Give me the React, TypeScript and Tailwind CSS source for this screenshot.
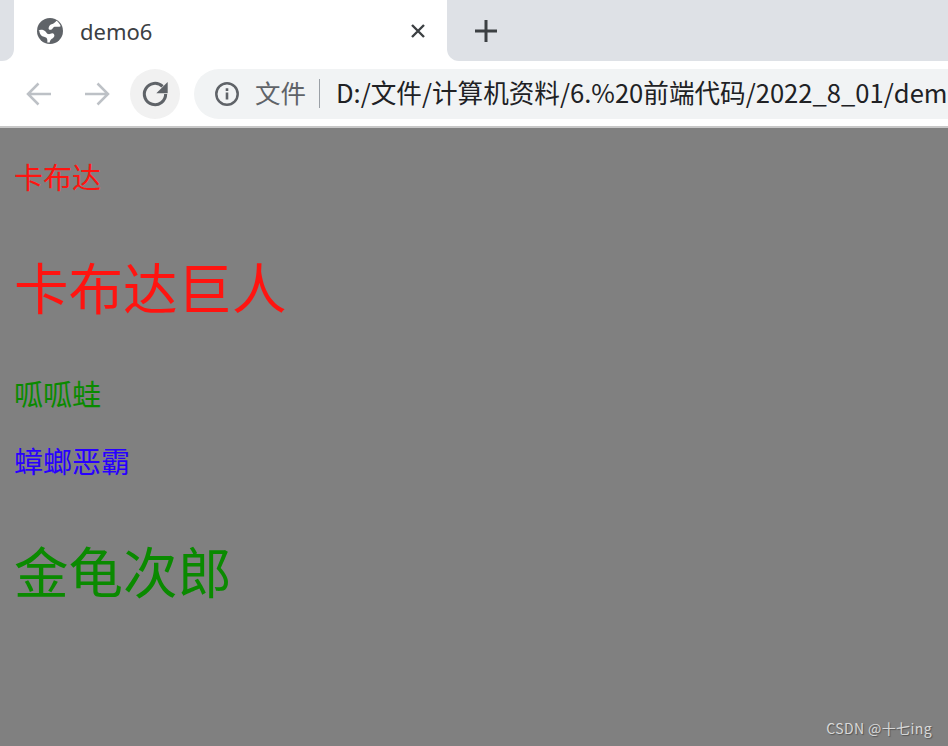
const CJK = "font-['Noto_Sans_CJK_SC','Noto_Sans',sans-serif]";

export default function App() {
  return (
    <div className="relative flex h-[746px] w-[948px] flex-col overflow-hidden bg-[#808080] font-['Noto_Sans','Noto_Sans_CJK_SC',sans-serif]">
      <div className="flex h-[61px] shrink-0 bg-white">
        <div className="w-[14px] rounded-br-[12px] bg-[#dee1e6]" />
        <div className="flex w-[433px] items-center rounded-t-[14px] bg-white pl-[23px] pr-[21px]">
          <svg viewBox="0 0 26 26" className="h-[26px] w-[26px] shrink-0">
            <circle cx="13" cy="13" r="13" fill="#5f6368" />
            <path d="M14.500 6.300c2.300-.6 4-2 5-3.500 1.900 1.300 3.400 3.300 4.200 5.400-2.700 1.400-4.500 0-6.200.6-1.500.6-1.800 2.300-3.300 2.900-1.300.5-2.700-.2-2.600-1.500.1-1.500 1.300-3.400 2.900-3.900Z" fill="#ffffff" />
            <path d="M1.200 12.500c2-1.300 5-.8 6.700.4 1.300 1 1.800 2.800 3.500 3.200 1.400.3 2.600-1 3.900-.9 1.500.1 2.400 1.500 2 3-.5 1.700-2.300 2.200-3.300 3.400-.9 1-1 1.800-1.300 2.800-.6.100-1.600.1-2.400 0 .2-1.800.2-3.600-1.200-4.800-1.200-1-2.800-.8-4.200-1.700-1.500-1-2.400-3-2.700-5.400Z" fill="#ffffff" />
          </svg>
          <span className="ml-[17px] pt-[1px] text-[22px] leading-[30px] text-[#3c4043]">demo6</span>
          <svg viewBox="0 0 16 16" className="ml-auto h-[16px] w-[16px] shrink-0" stroke="#3c4043" strokeWidth="2.400" fill="none">
            <path d="M2 2l12 12M14 2L2 14" />
          </svg>
        </div>
        <div className="flex flex-1 items-center rounded-bl-[12px] bg-[#dee1e6] pl-[28px]">
          <svg viewBox="0 0 22 22" className="h-[22px] w-[22px]" stroke="#3c4043" strokeWidth="3" fill="none">
            <path d="M11 0v22M0 11h22" />
          </svg>
        </div>
      </div>

      <div className="flex h-[65px] shrink-0 items-center bg-white">
        <svg viewBox="0 0 26 24" className="ml-[26px] h-[24px] w-[26px]" stroke="#bdc1c6" strokeWidth="2.500" fill="none">
          <path d="M25 12H2M12.500 1.500L2 12l10.500 10.500" />
        </svg>
        <svg viewBox="0 0 26 24" className="ml-[32px] h-[24px] w-[26px]" stroke="#bdc1c6" strokeWidth="2.500" fill="none">
          <path d="M1 12h23M13.500 1.500L24 12 13.500 22.500" />
        </svg>
        <div className="ml-[20px] flex h-[50px] w-[50px] items-center justify-center rounded-full bg-[#f1f1f1]">
          <svg viewBox="0 0 24 24" className="h-[32px] w-[32px]">
            <path d="M20 12a8 8 0 1 1-2.340-5.660" fill="none" stroke="#5f6368" strokeWidth="2.300" />
            <path d="M21.500 3v8.500H13Z" fill="#5f6368" />
          </svg>
        </div>
        <div className="ml-[14px] flex h-[50px] flex-1 items-center overflow-hidden rounded-l-[25px] bg-[#f1f3f4] pl-[21px]">
          <svg viewBox="0 0 24 24" className="h-[24px] w-[24px] shrink-0">
            <circle cx="12" cy="12" r="10.700" fill="none" stroke="#5f6368" strokeWidth="2.500" />
            <path d="M10.700 10.500h2.600v7h-2.600zM10.700 6.300h2.600v2.600h-2.600z" fill="#5f6368" />
          </svg>
          <span className={`ml-[16px] mt-[-3px] shrink-0 text-[25.500px] leading-none text-[#5f6368] ${CJK}`}>文件</span>
          <div className="ml-[13px] h-[29px] w-px shrink-0 bg-[#9aa0a6]" />
          <span className={`ml-[16px] mt-[-3px] whitespace-nowrap text-[25.600px] leading-none text-[#202124] ${CJK}`}>
            D:/文件/计算机资料/6.%20前端代码/2022_8_01/demo6.html
          </span>
        </div>
      </div>

      <div className="h-[2px] shrink-0 bg-[#c8c8c8]" />

      <main className={`flex flex-col items-start pl-[14px] ${CJK}`}>
        <p className="mt-[27px] text-[29px] leading-[42px] text-[#ff1410]">卡布达</p>
        <p className="mt-[50px] text-[54.500px] leading-[78px] text-[#ff1410]">卡布达巨人</p>
        <p className="mt-[47px] text-[29px] leading-[42px] text-[#0a8a00]">呱呱蛙</p>
        <p className="mt-[25px] text-[29px] leading-[42px] text-[#2800ff]">蟑螂恶霸</p>
        <p className="mt-[50px] text-[54.500px] leading-[78px] text-[#0a8a00]">金龟次郎</p>
      </main>

      <span className={`absolute right-[16px] top-[719px] text-[14px] leading-[18px] tracking-[0.4px] text-[#d8d8d8] [text-shadow:1px_1px_1px_#555] ${CJK}`}>
        CSDN @十七ing
      </span>
    </div>
  );
}
